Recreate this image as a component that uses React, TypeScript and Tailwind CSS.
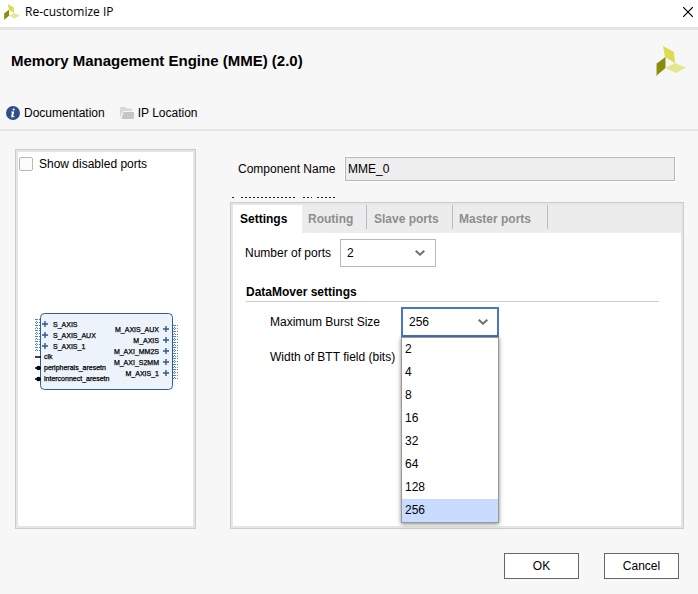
import React from "react";

const burstSizes = ["2", "4", "8", "16", "32", "64", "128", "256"];

const leftPorts = [
  { name: "S_AXIS", y: 14 },
  { name: "S_AXIS_AUX", y: 25 },
  { name: "S_AXIS_1", y: 36 },
];

const resetPins = [
  { name: "clk", y: 44, inverted: false },
  { name: "peripherals_aresetn", y: 55, inverted: true },
  { name: "interconnect_aresetn", y: 66, inverted: true },
];

const rightPorts = [
  { name: "M_AXIS_AUX", y: 18 },
  { name: "M_AXIS", y: 29 },
  { name: "M_AXI_MM2S", y: 40 },
  { name: "M_AXI_S2MM", y: 51 },
  { name: "M_AXIS_1", y: 62 },
];

function Logo({ className }: { className: string }) {
  return (
    <svg viewBox="0 0 30 30" className={className} aria-hidden="true">
      <path d="M7 0 L18 6 L19 17 L9 11 Z" fill="#dbdc52" />
      <path d="M0 18 L9.500 11 V22 L0 30 Z" fill="#8b8c0c" />
      <path d="M0.500 18 V29.500" stroke="#c9ca86" strokeWidth="1" />
      <path d="M9.500 22 L19 17 L30 21.500 L20 27 Z" fill="#e5e690" />
    </svg>
  );
}

function InfoIcon() {
  return (
    <svg viewBox="0 0 14 14" className="size-3.5" aria-hidden="true">
      <circle cx="7" cy="7" r="7" fill="#2f4f8a" />
      <circle cx="7.700" cy="3.500" r="1.100" fill="#fff" />
      <path d="M5.300 5.500 H8.200 L7.200 10.200 H8.500 L8.300 11.200 H5 L6 6.600 H5.100 Z" fill="#fff" />
    </svg>
  );
}

function FolderIcon() {
  return (
    <svg viewBox="0 0 14 12" className="h-3 w-3.5" aria-hidden="true">
      <path d="M0 11 V1 Q0 0 1 0 H5 L6.500 1.500 H12 V4 H3 Z" fill="#d8d8d8" />
      <path d="M3.500 5 H14 V11 Q14 12 13 12 H1.500 Z" fill="#c6c6c6" />
    </svg>
  );
}

function Chevron() {
  return (
    <svg
      viewBox="0 0 10 6"
      className="pointer-events-none col-start-1 row-start-1 mr-[11px] h-1.5 w-2.5 self-center justify-self-end"
      aria-hidden="true"
    >
      <path d="M0.700 0.700 L5 4.700 L9.300 0.700" fill="none" stroke="#707070" strokeWidth="2" />
    </svg>
  );
}

function Plus({ x, y }: { x: number; y: number }) {
  return <path d={`M${x - 3} ${y}h6M${x} ${y - 3}v6`} stroke="#35568f" strokeWidth="1.400" />;
}

function BusStub({ x, y }: { x: number; y: number }) {
  return (
    <g stroke="#4d86c4" strokeWidth="1" strokeDasharray="1 1" shapeRendering="crispEdges">
      <path d={`M${x} ${y - 4.5}h5M${x} ${y - 1.5}h5M${x} ${y + 1.5}h5M${x} ${y + 4.5}h5`} />
      <path d={`M${x + 1.5} ${y - 5}v10`} />
    </g>
  );
}

function BlockDiagram() {
  return (
    <svg
      viewBox="0 0 144 78"
      className="h-[78px] w-36 font-['Liberation_Sans',sans-serif] text-[7px]"
      role="img"
      aria-label="Block symbol"
    >
      {leftPorts.map((p) => (
        <BusStub key={p.name} x={0} y={p.y - 3} />
      ))}
      {rightPorts.map((p) => (
        <BusStub key={p.name} x={138} y={p.y - 1} />
      ))}
      <rect x="5.500" y="0.500" width="132" height="76" rx="4" fill="#edf3fa" stroke="#315b9f" />
      <g stroke="#000" strokeWidth="0.250">
        {leftPorts.map((p) => (
          <text key={p.name} x="18" y={p.y}>{p.name}</text>
        ))}
        {resetPins.map((p) => (
          <text key={p.name} x="9" y={p.y + 2}>{p.name}</text>
        ))}
        {rightPorts.map((p) => (
          <text key={p.name} x="124" y={p.y + 1} textAnchor="end">{p.name}</text>
        ))}
      </g>
      {leftPorts.map((p) => (
        <Plus key={p.name} x={10} y={p.y - 3} />
      ))}
      {rightPorts.map((p) => (
        <Plus key={p.name} x={131} y={p.y - 2} />
      ))}
      {resetPins.map((p) => (
        <g key={p.name}>
          <path d={`M0 ${p.y}h6`} stroke="#000" strokeWidth="1.500" />
          {p.inverted && <circle cx="3.500" cy={p.y} r="2.200" />}
        </g>
      ))}
    </svg>
  );
}

export default function App() {
  return (
    <div className="flex min-h-screen flex-col bg-[#f7f7f7] font-['Liberation_Sans',Arial,sans-serif] text-xs text-black">
      <header className="flex h-[30px] items-center gap-[5px] border-b-3 border-[#e5e5e5] bg-white pr-[3px] pb-1 pl-1">
        <Logo className="size-4" />
        <span className="flex-1 font-['Open_Sans',sans-serif]">Re-customize IP</span>
        <button type="button" aria-label="Close" className="p-0.5">
          <svg viewBox="0 0 10 10" className="size-2.5">
            <path d="M0 0 L10 10 M10 0 L0 10" stroke="#000" strokeWidth="1.200" />
          </svg>
        </button>
      </header>

      <section className="flex h-[101px] flex-col justify-between border-b-2 border-[#e5e5e5] pt-4 pr-3 pb-2 pl-[11px]">
        <div className="flex items-start justify-between">
          <h1 className="pt-[5px] text-[15px] leading-5 font-bold">Memory Management Engine (MME) (2.0)</h1>
          <Logo className="size-[30px]" />
        </div>
        <nav className="-ml-[5px] flex gap-[15px]">
          <a href="#documentation" className="flex items-center gap-1">
            <InfoIcon />
            Documentation
          </a>
          <a href="#location" className="flex items-center gap-1">
            <FolderIcon />
            IP Location
          </a>
        </nav>
      </section>

      <main className="flex flex-1 pt-[18px] pr-3.5 pl-[15px]">
        <section className="flex w-[181px] shrink-0 border border-[#ccc]">
          <div className="flex flex-1 flex-col border-2 border-[#e6e6e6] bg-white">
            <label className="flex items-center gap-1.5 pt-1 pl-px">
              <input type="checkbox" className="size-3.5 appearance-none rounded-xs border border-[#b8b8b8] bg-[#fcfcfc]" />
              Show disabled ports
            </label>
            <div className="flex justify-center pt-[141px] pl-0.5">
              <BlockDiagram />
            </div>
          </div>
        </section>

        <section className="ml-[34px] flex flex-1 flex-col">
          <div className="flex items-center pt-2 pr-[9px] pl-2">
            <label htmlFor="component-name" className="w-[107px]">Component Name</label>
            <input
              id="component-name"
              readOnly
              defaultValue="MME_0"
              className="h-6 min-w-0 flex-1 border border-[#b8b8b8] bg-[#eee] px-0.5 outline-1 outline-white"
            />
          </div>
          <svg viewBox="0 0 108 2" className="mt-4 h-0.5 w-[108px]" aria-hidden="true">
            <path d="M2 0.500h2M11 0.500h55M73 0.500h9M87 0.500h20" stroke="#222" strokeWidth="1" strokeDasharray="2 2" />
          </svg>

          <div className="mt-[3px] flex h-[327px] border border-[#ccc]">
            <div className="flex flex-1 flex-col border-2 border-[#e6e6e6] bg-white">
              <div role="tablist" className="flex h-7 bg-[#ececec] font-bold text-[#8e8e8e]">
                <button type="button" role="tab" aria-selected="true" className="w-[69px] bg-white pl-[7px] text-left text-black">Settings</button>
                <button type="button" role="tab" aria-selected="false" className="mb-1 w-[65px] border-r border-[#bbb] pt-1 pl-1.5 text-left">Routing</button>
                <button type="button" role="tab" aria-selected="false" className="mb-1 w-[86px] border-r border-[#bbb] pt-1 pl-[7px] text-left">Slave ports</button>
                <button type="button" role="tab" aria-selected="false" className="mb-1 w-[95px] border-r border-[#bbb] pt-1 pl-1.5 text-left">Master ports</button>
              </div>

              <div className="flex flex-col pt-1.5 pr-[22px] pl-3">
                <div className="flex items-center">
                  <label htmlFor="ports" className="w-[95px]">Number of ports</label>
                  <div className="grid w-24">
                    <select id="ports" defaultValue="2" className="col-start-1 row-start-1 h-7 appearance-none border border-[#b8b8b8] bg-white pl-1.5">
                      <option>2</option>
                      <option>4</option>
                      <option>8</option>
                    </select>
                    <Chevron />
                  </div>
                </div>

                <h2 className="mt-4 ml-px border-b border-[#ccc] leading-[18px] font-bold">DataMover settings</h2>

                <div className="mt-[5px] flex items-center pl-[25px]">
                  <label htmlFor="burst" className="w-[131px]">Maximum Burst Size</label>
                  <div className="relative grid w-[98px]">
                    <select id="burst" defaultValue="256" className="col-start-1 row-start-1 h-[30px] appearance-none border-2 border-[#4a74c4] bg-white pl-1.5">
                      {burstSizes.map((s) => (
                        <option key={s}>{s}</option>
                      ))}
                    </select>
                    <Chevron />
                    <ul role="listbox" aria-label="Maximum Burst Size" className="absolute top-full left-0 w-full border border-[#999] bg-white shadow-[0_1px_4px_rgba(0,0,0,0.5)]">
                      {burstSizes.map((s) => (
                        <li key={s} role="option" aria-selected={s === "256"} className="h-[23px] pl-[3px] leading-[23px] aria-selected:bg-[#c9dcff]">
                          {s}
                        </li>
                      ))}
                    </ul>
                  </div>
                </div>
                <p className="mt-3 pl-[25px]">Width of BTT field (bits)</p>
              </div>
            </div>
          </div>
        </section>
      </main>

      <footer className="flex justify-end gap-[25px] pt-6 pr-[19px] pb-[15px]">
        <button type="button" className="h-[26px] w-[75px] border border-[#666] bg-white">OK</button>
        <button type="button" className="h-[26px] w-[75px] border border-[#666] bg-white">Cancel</button>
      </footer>
    </div>
  );
}
